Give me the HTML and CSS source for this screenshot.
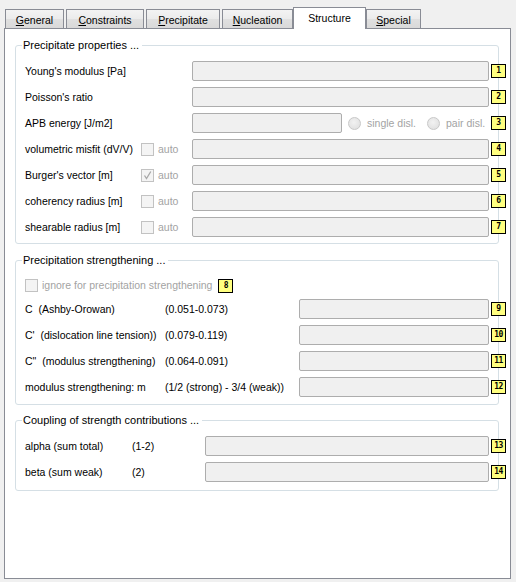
FILE: index.html
```html
<!DOCTYPE html>
<html lang="en">
<head>
<meta charset="utf-8">
<title>Structure</title>
<link rel="stylesheet" href="styles.css">
</head>
<body>
<div class="window">
  <div class="tabs">
    <div class="tab tab-general"><u>G</u>eneral</div>
    <div class="tab tab-constraints"><u>C</u>onstraints</div>
    <div class="tab tab-precipitate"><u>P</u>recipitate</div>
    <div class="tab tab-nucleation"><u>N</u>ucleation</div>
    <div class="tab tab-structure active">Structure</div>
    <div class="tab tab-special"><u>S</u>pecial</div>
  </div>

  <div class="panel">
    <fieldset class="group group-props">
      <legend>Precipitate properties ...</legend>

      <div class="row">
        <span class="label wide">Young's modulus [Pa]</span>
        <span class="field"></span>
        <span class="badge">1</span>
      </div>
      <div class="row">
        <span class="label wide">Poisson's ratio</span>
        <span class="field"></span>
        <span class="badge">2</span>
      </div>
      <div class="row">
        <span class="label wide">APB energy [J/m2]</span>
        <span class="apb">
          <span class="field field-short"></span>
          <span class="radio"></span><span class="dim radio-text">single disl.</span>
          <span class="radio radio-second"></span><span class="dim radio-text">pair disl.</span>
        </span>
        <span class="badge">3</span>
      </div>
      <div class="row">
        <span class="label">volumetric misfit (dV/V)</span>
        <span class="auto"><span class="check"></span><span class="dim">auto</span></span>
        <span class="field"></span>
        <span class="badge">4</span>
      </div>
      <div class="row">
        <span class="label">Burger's vector [m]</span>
        <span class="auto"><span class="check checked"><svg width="11" height="11" viewBox="0 0 11 11"><path d="M2.5 5.5 L4.5 8.5 L8.8 1.5" fill="none" stroke="#a8a8a8" stroke-width="1.3"/></svg></span><span class="dim">auto</span></span>
        <span class="field"></span>
        <span class="badge">5</span>
      </div>
      <div class="row">
        <span class="label">coherency radius [m]</span>
        <span class="auto"><span class="check"></span><span class="dim">auto</span></span>
        <span class="field"></span>
        <span class="badge">6</span>
      </div>
      <div class="row">
        <span class="label">shearable radius [m]</span>
        <span class="auto"><span class="check"></span><span class="dim">auto</span></span>
        <span class="field"></span>
        <span class="badge">7</span>
      </div>
    </fieldset>

    <fieldset class="group group-strength">
      <legend>Precipitation strengthening ...</legend>

      <div class="row row-ignore">
        <span class="check"></span>
        <span class="dim ignore-text">ignore for precipitation strengthening</span>
        <span class="badge badge-inline">8</span>
      </div>
      <div class="row">
        <span class="label">C&nbsp; (Ashby-Orowan)</span>
        <span class="range">(0.051-0.073)</span>
        <span class="field"></span>
        <span class="badge">9</span>
      </div>
      <div class="row">
        <span class="label">C'&nbsp; (dislocation line tension))</span>
        <span class="range">(0.079-0.119)</span>
        <span class="field"></span>
        <span class="badge">10</span>
      </div>
      <div class="row">
        <span class="label">C"&nbsp; (modulus strengthening)</span>
        <span class="range">(0.064-0.091)</span>
        <span class="field"></span>
        <span class="badge">11</span>
      </div>
      <div class="row">
        <span class="label">modulus strengthening: m</span>
        <span class="range">(1/2 (strong) - 3/4 (weak))</span>
        <span class="field"></span>
        <span class="badge">12</span>
      </div>
    </fieldset>

    <fieldset class="group group-coupling">
      <legend>Coupling of strength contributions ...</legend>

      <div class="row">
        <span class="label">alpha (sum total)</span>
        <span class="range">(1-2)</span>
        <span class="field"></span>
        <span class="badge">13</span>
      </div>
      <div class="row">
        <span class="label">beta (sum weak)</span>
        <span class="range">(2)</span>
        <span class="field"></span>
        <span class="badge">14</span>
      </div>
    </fieldset>
  </div>
</div>
</body>
</html>
```

FILE: styles.css
```css
* {
  box-sizing: border-box;
}

html, body {
  margin: 0;
  padding: 0;
  background: #f0f0f0;
}

body {
  font-family: "Liberation Sans", Arial, sans-serif;
  font-size: 10.5px;
  line-height: 14px;
  color: #000;
}

.window {
  width: 516px;
  height: 582px;
  padding: 7px 5px 3px 4px;
  display: flex;
  flex-direction: column;
}

/* ---- tab strip ---- */
.tabs {
  display: flex;
  align-items: flex-end;
  gap: 2px;
  height: 21px;
  padding-left: 1px;
}

.tab {
  height: 19px;
  border: 1px solid #898c95;
  border-bottom: none;
  background: linear-gradient(#f3f3f3, #ebebeb 50%, #e0e0e0 50%, #d9d9d9);
  display: flex;
  align-items: center;
  justify-content: center;
  padding-top: 2px;
}

.tab u {
  text-decoration: underline;
  text-underline-offset: 1px;
}

.tab-general { width: 59px; }
.tab-constraints { width: 78px; }
.tab-precipitate { width: 74px; }
.tab-nucleation { width: 71px; }
.tab-special { width: 55px; }

.tab.active {
  position: relative;
  z-index: 1;
  width: 73px;
  height: 22px;
  margin: 0 -2px -1px -2px;
  background: #fff;
  padding-top: 0;
  padding-bottom: 2px;
}

/* ---- page body ---- */
.panel {
  flex: 1;
  background: #fff;
  border: 1px solid #898c95;
}

.group {
  margin: 9px 11px 0 10px;
  padding: 9px 9px 6px 9px;
  border: 1px solid #d5dfe5;
  border-radius: 3px;
  min-width: 0;
}

.group legend {
  margin-left: -3px;
  padding: 0 3px 0 1px;
  line-height: 14px;
  font-size: 11px;
}

.group-strength {
  padding-top: 8px;
  padding-bottom: 7px;
}

.group-coupling {
  margin-top: 8px;
  padding-bottom: 8px;
}

.row {
  position: relative;
  display: grid;
  align-items: center;
  height: 20px;
  margin-top: 6px;
}

.row:first-of-type {
  margin-top: 0;
}

.group-props .row { grid-template-columns: 116px 51px 1fr; }
.group-strength .row { grid-template-columns: 140px 134px 1fr; }
.group-coupling .row { grid-template-columns: 107px 73px 1fr; }

.label.wide {
  grid-column: 1 / 3;
}

.label, .range {
  white-space: nowrap;
}

.field {
  display: block;
  height: 20px;
  border: 1px solid #adadad;
  border-radius: 2px;
  background: #f0f0f0;
}

.dim {
  color: #a3a3a3;
}

/* check boxes, drawn disabled */
.auto {
  display: flex;
  align-items: center;
}

.check {
  display: inline-flex;
  align-items: center;
  justify-content: center;
  width: 13px;
  height: 13px;
  border: 1px solid #c2c2c2;
  background: #f4f4f4;
  margin-right: 4px;
  flex: none;
}

/* APB energy row: short field plus radio choices */
.apb {
  display: flex;
  align-items: center;
}

.field-short {
  width: 150px;
}

.radio {
  width: 13px;
  height: 13px;
  border-radius: 50%;
  border: 1px solid #c8c8c8;
  background: radial-gradient(circle at 45% 40%, #f2f2f2, #dcdcdc);
  margin-left: 6px;
  flex: none;
}

.radio-second {
  margin-left: 11px;
}

.radio-text {
  margin-left: 6px;
  white-space: nowrap;
}

/* numbered help markers */
.badge {
  position: absolute;
  left: calc(100% + 2px);
  top: 3px;
  width: 15px;
  height: 14px;
  border: 1px solid #000;
  background: #ffff80;
  font-family: "DejaVu Sans Mono", monospace;
  font-weight: bold;
  font-size: 8px;
  line-height: 12px;
  text-align: center;
  letter-spacing: -0.5px;
}

.row-ignore {
  display: flex;
  height: 20px;
  margin-bottom: -2px;
}

.ignore-text {
  white-space: nowrap;
}

.badge.badge-inline {
  position: static;
  margin-left: 6px;
  margin-top: 2px;
  flex: none;
}
```
